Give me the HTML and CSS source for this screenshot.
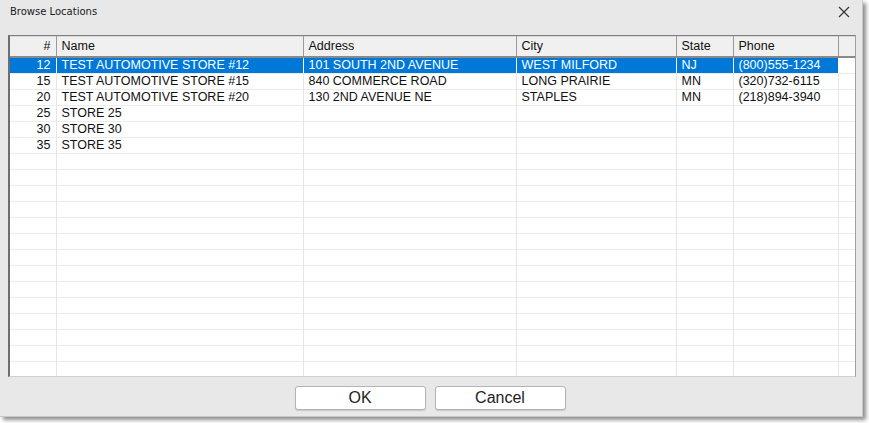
FILE: index.html
```html
<!DOCTYPE html>
<html>
<head>
<meta charset="utf-8">
<link rel="stylesheet" href="styles.css">
</head>
<body>
<div class="window">
  <div class="titlebar">
    <span class="title">Browse Locations</span>
    <svg class="close" width="12" height="12" viewBox="0 0 12 12"><path d="M1 1L11 11M11 1L1 11" stroke="#333" stroke-width="1.2" fill="none"/></svg>
  </div>
  <div class="gridbox">
    <table class="grid">
      <colgroup>
        <col class="c-num"><col class="c-name"><col class="c-addr"><col class="c-city"><col class="c-state"><col class="c-phone"><col class="c-extra">
      </colgroup>
      <thead>
        <tr><th class="num">#</th><th>Name</th><th>Address</th><th>City</th><th>State</th><th>Phone</th><th class="extra"></th></tr>
      </thead>
      <tbody>
        <tr class="sel"><td class="num">12</td><td>TEST AUTOMOTIVE STORE #12</td><td>101 SOUTH 2ND AVENUE</td><td>WEST MILFORD</td><td>NJ</td><td>(800)555-1234</td><td class="extra"></td></tr>
        <tr><td class="num">15</td><td>TEST AUTOMOTIVE STORE #15</td><td>840 COMMERCE ROAD</td><td>LONG PRAIRIE</td><td>MN</td><td>(320)732-6115</td><td class="extra"></td></tr>
        <tr><td class="num">20</td><td>TEST AUTOMOTIVE STORE #20</td><td>130 2ND AVENUE NE</td><td>STAPLES</td><td>MN</td><td>(218)894-3940</td><td class="extra"></td></tr>
        <tr><td class="num">25</td><td>STORE 25</td><td></td><td></td><td></td><td></td><td class="extra"></td></tr>
        <tr><td class="num">30</td><td>STORE 30</td><td></td><td></td><td></td><td></td><td class="extra"></td></tr>
        <tr><td class="num">35</td><td>STORE 35</td><td></td><td></td><td></td><td></td><td class="extra"></td></tr>
        <tr><td></td><td></td><td></td><td></td><td></td><td></td><td class="extra"></td></tr>
        <tr><td></td><td></td><td></td><td></td><td></td><td></td><td class="extra"></td></tr>
        <tr><td></td><td></td><td></td><td></td><td></td><td></td><td class="extra"></td></tr>
        <tr><td></td><td></td><td></td><td></td><td></td><td></td><td class="extra"></td></tr>
        <tr><td></td><td></td><td></td><td></td><td></td><td></td><td class="extra"></td></tr>
        <tr><td></td><td></td><td></td><td></td><td></td><td></td><td class="extra"></td></tr>
        <tr><td></td><td></td><td></td><td></td><td></td><td></td><td class="extra"></td></tr>
        <tr><td></td><td></td><td></td><td></td><td></td><td></td><td class="extra"></td></tr>
        <tr><td></td><td></td><td></td><td></td><td></td><td></td><td class="extra"></td></tr>
        <tr><td></td><td></td><td></td><td></td><td></td><td></td><td class="extra"></td></tr>
        <tr><td></td><td></td><td></td><td></td><td></td><td></td><td class="extra"></td></tr>
        <tr><td></td><td></td><td></td><td></td><td></td><td></td><td class="extra"></td></tr>
        <tr><td></td><td></td><td></td><td></td><td></td><td></td><td class="extra"></td></tr>
        <tr><td></td><td></td><td></td><td></td><td></td><td></td><td class="extra"></td></tr>
      </tbody>
    </table>
  </div>
  <div class="buttons">
    <button class="btn">OK</button>
    <button class="btn">Cancel</button>
  </div>
</div>
</body>
</html>
```

FILE: styles.css
```css
html, body {
  margin: 0;
  padding: 0;
  background: #ffffff;
}
body {
  width: 869px;
  height: 423px;
  overflow: hidden;
  font-family: "Liberation Sans", Arial, sans-serif;
}
.window {
  width: 863px;
  height: 417px;
  background: #e8e8e8;
  box-shadow: 3px 3px 4px rgba(0,0,0,0.45);
  border-right: 1px solid #c8c8c8;
  border-bottom: 1px solid #c8c8c8;
  box-sizing: border-box;
  display: flex;
  flex-direction: column;
}
.titlebar {
  height: 35px;
  display: flex;
  align-items: flex-start;
  justify-content: space-between;
  padding: 5px 12px 0 10px;
  box-sizing: border-box;
}
.title {
  font-family: "DejaVu Sans", sans-serif;
  font-size: 10px;
  color: #1a1a1a;
  line-height: 14px;
}
.close {
  margin-top: 1px;
}
.gridbox {
  margin-left: 8px;
  width: 848px;
  height: 342px;
  border-top: 1px solid #808080;
  border-left: 2px solid #6e6e6e;
  border-right: 1px solid #a0a0a0;
  border-bottom: 1px solid #d0d0d0;
  background: #ffffff;
  box-sizing: border-box;
  overflow: hidden;
}
.grid {
  border-collapse: collapse;
  table-layout: fixed;
  width: 845px;
  font-size: 12.5px;
  color: #111;
}
.c-num { width: 46px; }
.c-name { width: 247px; }
.c-addr { width: 213px; }
.c-city { width: 160px; }
.c-state { width: 57px; }
.c-phone { width: 105px; }
.c-extra { width: 17px; }
th {
  height: 20px;
  padding: 0 0 0 5px;
  background: #f0f0f0;
  font-weight: normal;
  text-align: left;
  border-right: 1px solid #9a9a9a;
  border-bottom: 2px solid #8a8a8a;
  border-top: 1px solid #d8d8d8;
  box-sizing: border-box;
  line-height: 16px;
}
th.num, td.num {
  text-align: right;
  padding: 0 5px 0 0;
}
td {
  height: 16px;
  padding: 0 0 0 5px;
  border-right: 1px solid #e6e6e6;
  border-bottom: 1px solid #ececec;
  box-sizing: border-box;
  line-height: 15px;
  white-space: nowrap;
  overflow: hidden;
}
td.extra, th.extra {
  border-right: none;
}
tr.sel td {
  background: #0078d7;
  color: #ffffff;
  border-right-color: #ffffff;
}
tr.sel td.extra {
  background: #ffffff;
}
.buttons {
  display: flex;
  justify-content: center;
  gap: 9px;
  padding-top: 9px;
  padding-right: 2px;
}
.btn {
  width: 131px;
  height: 24px;
  background: #ffffff;
  border: 1px solid #b4b4b4;
  border-radius: 3px;
  font-family: "Liberation Sans", Arial, sans-serif;
  font-size: 16px;
  color: #222;
  padding: 0;
  box-shadow: 0 1px 1px rgba(0,0,0,0.15);
}
```
